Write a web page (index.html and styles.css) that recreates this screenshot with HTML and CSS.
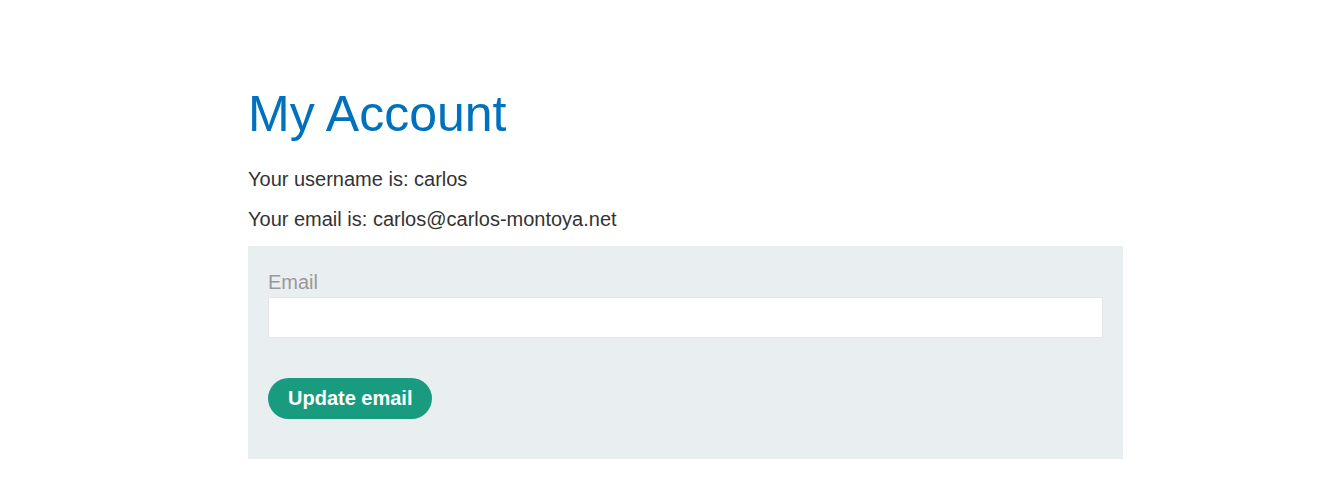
FILE: index.html
```html
<!DOCTYPE html>
<html lang="en">
<head>
    <meta charset="UTF-8">
    <title>My Account</title>
    <link rel="stylesheet" href="styles.css">
</head>
<body>
    <div class="container">
        <h1>My Account</h1>
        <p>Your username is: carlos</p>
        <p>Your email is: <span id="user-email">carlos@carlos-montoya.net</span></p>
        <form class="login-form" name="change-email-form" action="/my-account/change-email" method="POST">
            <label for="email">Email</label>
            <input id="email" required type="email" name="email" value="">
            <button class="button" type="submit">Update email</button>
        </form>
    </div>
</body>
</html>
```

FILE: styles.css
```css
body {
    margin: 0;
    background-color: #fff;
    color: #333332;
    font-family: "Liberation Sans", Arial, Helvetica, sans-serif;
    font-size: 20px;
}
.container {
    width: 875px;
    padding: 84px 0 20px 248px;
}
h1 {
    color: #0071bc;
    font-size: 50px;
    font-weight: normal;
    line-height: 60px;
    margin: 0 0 23px 0;
}
p {
    margin: 0 0 16px 0;
    line-height: 24px;
}
.login-form {
    background-color: #e9eef1;
    display: flex;
    flex-direction: column;
    align-items: flex-start;
    padding: 24px 20px 40px 20px;
    margin-top: -1px;
}
label {
    color: #999;
    line-height: 24px;
    margin-bottom: 3px;
}
input {
    box-sizing: border-box;
    width: 100%;
    height: 41px;
    border: 1px solid #e6e6e6;
    background-color: #fff;
    font-size: 20px;
    margin: 0 0 40px 0;
}
.button {
    background-color: #189b7f;
    color: #fff;
    border: none;
    border-radius: 25px;
    font-family: inherit;
    font-size: 20px;
    font-weight: bold;
    height: 41px;
    padding: 0 20px;
    cursor: pointer;
}
```
